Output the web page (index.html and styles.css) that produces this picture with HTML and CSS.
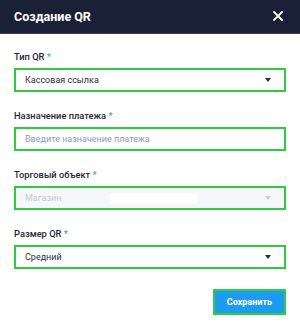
FILE: index.html
```html
<!DOCTYPE html>
<html lang="ru">
<head>
    <meta charset="UTF-8">
    <meta name="viewport" content="width=device-width, initial-scale=1.0">
    <title>Создание QR</title>
    <link rel="stylesheet" href="styles.css">
</head>
<body>
    <div class="modal">
        <div class="modal-header">
            <h1>Создание QR</h1>
            <span class="close">
                <svg width="10" height="10" viewBox="0 0 10 10">
                    <path d="M1 1 L9 9 M9 1 L1 9" stroke="#fff" stroke-width="1.8" stroke-linecap="square"/>
                </svg>
            </span>
        </div>
        <form class="modal-body">
            <div class="form-group">
                <label>Тип QR <span class="req">*</span></label>
                <div class="select">
                    <span>Кассовая ссылка</span>
                    <span class="arrow"></span>
                </div>
            </div>
            <div class="form-group">
                <label>Назначение платежа <span class="req">*</span></label>
                <input type="text" placeholder="Введите назначение платежа">
            </div>
            <div class="form-group">
                <label>Торговый объект <span class="req">*</span></label>
                <div class="select disabled">
                    <span>Магазин</span>
                    <span class="hidden-value"></span>
                    <span class="arrow"></span>
                </div>
            </div>
            <div class="form-group">
                <label>Размер QR <span class="req">*</span></label>
                <div class="select">
                    <span>Средний</span>
                    <span class="arrow"></span>
                </div>
            </div>
            <div class="actions">
                <button type="button">Сохранить</button>
            </div>
        </form>
    </div>
</body>
</html>
```

FILE: styles.css
```css
* {
    box-sizing: border-box;
    margin: 0;
    padding: 0;
}

body {
    font-family: Roboto, 'Liberation Sans', sans-serif;
    background-color: #fff;
    width: 300px;
    height: 329px;
    overflow: hidden;
}

.modal-header {
    height: 34px;
    background-color: #1a2035;
    border-bottom: 1px solid #3b4254;
    display: flex;
    align-items: center;
    justify-content: space-between;
    padding: 0 17px 0 14px;
}

.modal-header h1 {
    color: #fff;
    font-size: 12.5px;
    font-weight: 700;
    margin-top: -1px;
}

.close {
    display: flex;
    margin-top: -1px;
}

.modal-body {
    padding: 16px 14px 0;
}

.form-group {
    margin-bottom: 17px;
}

label {
    display: block;
    font-size: 9.3px;
    line-height: 14px;
    font-weight: 500;
    color: #1f2533;
    margin-bottom: 4px;
}

.req {
    color: #3d9cf2;
}

.select,
input {
    width: 100%;
    height: 24px;
    border: 2px solid #2ecc40;
    background-color: #fff;
    font-family: inherit;
    font-size: 9px;
    color: #2b2f38;
    padding: 0 13px 0 9px;
    display: flex;
    align-items: center;
}

input::placeholder {
    color: #8f9bb3;
}

input:focus {
    outline: none;
}

.select span:first-child {
    flex: 1;
}

.arrow {
    width: 0;
    height: 0;
    border-left: 3.5px solid transparent;
    border-right: 3.5px solid transparent;
    border-top: 4px solid #2b2f38;
}

.select.disabled {
    background-color: #f5f7fa;
    color: #c3c9d4;
}

.select.disabled span:first-child {
    flex: 0 0 auto;
    width: 85px;
}

.select.disabled .hidden-value {
    width: 87px;
    height: 11px;
    background-color: #fff;
    margin-right: auto;
}

.select.disabled .arrow {
    border-top-color: #c8ced8;
}

.actions {
    display: flex;
    justify-content: flex-end;
    margin-top: 20px;
}

button {
    height: 26px;
    padding: 0 12px;
    background-color: #1d9bf0;
    border: 2px solid #2ecc40;
    color: #fff;
    font-family: inherit;
    font-size: 9px;
    font-weight: 700;
    cursor: pointer;
}
```
